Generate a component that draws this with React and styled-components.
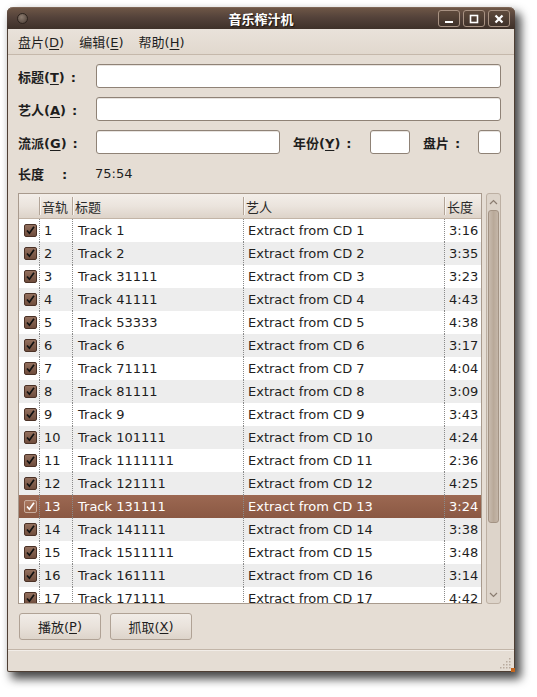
import React from 'react';
import styled, { createGlobalStyle } from 'styled-components';

const FONT = '"DejaVu Sans", "Noto Sans CJK SC", sans-serif';

const GlobalStyle = createGlobalStyle`
  html, body {
    margin: 0;
    padding: 0;
    background: #ffffff;
  }
  body {
    font-family: ${FONT};
    font-size: 13px;
    color: #1e1e1e;
  }
`;

const tracks = [
  ['1', 'Track 1', '3:16'],
  ['2', 'Track 2', '3:35'],
  ['3', 'Track 31111', '3:23'],
  ['4', 'Track 41111', '4:43'],
  ['5', 'Track 53333', '4:38'],
  ['6', 'Track 6', '3:17'],
  ['7', 'Track 71111', '4:04'],
  ['8', 'Track 81111', '3:09'],
  ['9', 'Track 9', '3:43'],
  ['10', 'Track 101111', '4:24'],
  ['11', 'Track 1111111', '2:36'],
  ['12', 'Track 121111', '4:25'],
  ['13', 'Track 131111', '3:24'],
  ['14', 'Track 141111', '3:38'],
  ['15', 'Track 1511111', '3:48'],
  ['16', 'Track 161111', '3:14'],
  ['17', 'Track 171111', '4:42'],
];

const SELECTED = 13;
const COLS = '20px 33px 171px 201px 1fr';

const Page = styled.div`
  padding: 7px 0 0 7px;
  height: 697px;
  box-sizing: border-box;
`;

const Window = styled.div`
  width: 508px;
  height: 665px;
  box-sizing: border-box;
  display: flex;
  flex-direction: column;
  background: #e5ddd4;
  border: 1px solid #4e3f34;
  border-top: none;
  border-radius: 6px 6px 2px 2px;
  box-shadow: 5px 6px 10px 1px rgba(0, 0, 0, 0.72);
  position: relative;
`;

const TitleBar = styled.div`
  height: 22px;
  flex: none;
  margin: 0 -1px;
  border-radius: 6px 6px 0 0;
  background: linear-gradient(#6d5646 0%, #54423a 45%, #3e3129 100%);
  border-top: 1px solid #7d6656;
  box-sizing: border-box;
  display: flex;
  align-items: center;
  position: relative;
  padding: 0 5px 0 10px;
`;

const WinIcon = styled.div`
  width: 9px;
  height: 9px;
  border-radius: 50%;
  background: radial-gradient(circle at 40% 35%, #8c7c70, #4a3c33);
  border: 1px solid #2d231d;
`;

const Title = styled.div`
  position: absolute;
  left: 0;
  right: 0;
  text-align: center;
  font-weight: bold;
  font-size: 13px;
  color: #ffffff;
  text-shadow: 1px 1px 1px #1a120d;
  pointer-events: none;
`;

const WinButtons = styled.div`
  margin-left: auto;
  display: flex;
  gap: 3px;
  position: relative;
`;

const WinButton = styled.div`
  width: 22px;
  height: 17px;
  box-sizing: border-box;
  border: 1px solid #a89282;
  border-radius: 3px;
  background: linear-gradient(#5e4a3c, #40322a);
  display: flex;
  align-items: center;
  justify-content: center;
`;

const MenuBar = styled.div`
  height: 26px;
  flex: none;
  box-sizing: border-box;
  display: flex;
  align-items: center;
  padding-left: 3px;
  background: linear-gradient(#e9e2da, #e1d8ce);
  border-bottom: 1px solid #c5b8ab;
`;

const MenuItem = styled.div`
  padding: 0 7px;
  margin-right: 1px;
  font-size: 13px;
  color: #1e1e1e;
`;

const U = styled.span`
  text-decoration: underline;
  text-underline-offset: 2px;
`;

const Colon = styled.span`
  margin-left: ${(p) => p.$ml}px;
`;

const Body = styled.div`
  flex: 1;
  display: flex;
  flex-direction: column;
  padding: 9px 13px 0 10px;
`;

const FormRow = styled.div`
  display: flex;
  align-items: center;
  height: 24px;
  margin-bottom: 9px;
`;

const Label = styled.div`
  width: ${(p) => p.$w || 78}px;
  margin-left: ${(p) => p.$ml || 0}px;
  flex: none;
  font-weight: bold;
  font-size: 13px;
  white-space: nowrap;
  color: #1e1e1e;
`;

const Input = styled.div`
  height: 24px;
  box-sizing: border-box;
  background: #ffffff;
  border: 1px solid #8f8276;
  border-radius: 3px;
  box-shadow: inset 0 1px 0 #e8e4e0;
  ${(p) => (p.$w ? `width: ${p.$w}px; flex: none;` : 'flex: 1;')}
`;

const LengthRow = styled.div`
  display: flex;
  align-items: center;
  height: 20px;
  margin-bottom: 10px;
`;

const Value = styled.div`
  font-size: 13px;
  margin-left: -1px;
`;

const ListArea = styled.div`
  display: flex;
  gap: 4px;
  height: 411px;
`;

const TreeFrame = styled.div`
  flex: 1;
  border: 1px solid #a89a8d;
  background: #ffffff;
  display: flex;
  flex-direction: column;
  overflow: hidden;
`;

const HeaderRow = styled.div`
  display: grid;
  grid-template-columns: ${COLS};
  height: 24px;
  flex: none;
  background: linear-gradient(#f3eee9 0%, #ebe4dd 50%, #ddd3c9 100%);
  border-bottom: 1px solid #c2b4a6;
`;

const HeaderCell = styled.div`
  display: flex;
  align-items: center;
  padding-left: 3px;
  font-size: 13px;
  color: #2a2a2a;
  position: relative;
  ${(p) =>
    p.$sep &&
    `&::before {
      content: '';
      position: absolute;
      left: 0;
      top: 3px;
      bottom: 3px;
      width: 1px;
      background: #b2a497;
      box-shadow: 1px 0 0 #f8f4f0;
    }`}
`;

const Rows = styled.div`
  flex: 1;
  overflow: hidden;
`;

const Row = styled.div`
  display: grid;
  grid-template-columns: ${COLS};
  height: 23px;
  background: ${(p) =>
    p.$selected
      ? 'linear-gradient(#9c6852, #8a5843)'
      : p.$odd
      ? '#ffffff'
      : '#ededed'};
  color: ${(p) => (p.$selected ? '#ffffff' : '#1e1e1e')};
`;

const Cell = styled.div`
  display: flex;
  align-items: center;
  padding-left: ${(p) => p.$pl || 5}px;
  border-left: 1px dotted #8a8a8a;
  font-size: 13px;
  white-space: nowrap;
  overflow: hidden;
`;

const CheckCell = styled.div`
  display: flex;
  align-items: center;
  justify-content: flex-end;
  padding-right: 2px;
`;

const Box = styled.div`
  width: 13px;
  height: 13px;
  box-sizing: border-box;
  border-radius: 2px;
  border: 1px solid ${(p) => (p.$selected ? '#c8ab9c' : '#4a3126')};
  background: ${(p) =>
    p.$selected
      ? 'linear-gradient(#a9775f, #956249)'
      : 'linear-gradient(#93705e, #6f4d3d)'};
  display: flex;
  align-items: center;
  justify-content: center;
`;

const ScrollBar = styled.div`
  width: 15px;
  flex: none;
  box-sizing: border-box;
  border: 1px solid #bdb0a3;
  border-radius: 3px;
  background: #ddd4ca;
  display: flex;
  flex-direction: column;
  align-items: center;
`;

const Arrow = styled.div`
  height: 16px;
  flex: none;
  display: flex;
  align-items: center;
  justify-content: center;
  ${(p) => p.$end && 'margin-top: auto;'}
`;

const Thumb = styled.div`
  width: 11px;
  height: 313px;
  box-sizing: border-box;
  border: 1px solid #a39384;
  border-radius: 3px;
  background: linear-gradient(90deg, #c8bbae, #b9a999 50%, #c4b6a8);
`;

const ButtonRow = styled.div`
  display: flex;
  gap: 9px;
  padding: 9px 0 0 1px;
  height: 27px;
  box-sizing: content-box;
`;

const Button = styled.div`
  width: 82px;
  height: 27px;
  box-sizing: border-box;
  border: 1px solid #b0a295;
  border-radius: 3px;
  background: linear-gradient(#f1ece7 0%, #e9e2db 50%, #ddd4ca 100%);
  display: flex;
  align-items: center;
  justify-content: center;
  font-size: 13px;
  color: #1e1e1e;
`;

const StatusBar = styled.div`
  margin-top: 9px;
  margin-left: -10px;
  margin-right: -13px;
  flex: 1;
  border-top: 1px solid #c2b5a8;
  box-shadow: inset 0 1px 0 #f2ede8;
  position: relative;
`;

const Grip = styled.svg`
  position: absolute;
  right: 2px;
  bottom: 2px;
`;

const Corner = styled.div`
  position: absolute;
  right: -1px;
  bottom: -1px;
  width: 4px;
  height: 4px;
  background: #c4651c;
`;

const Check = ({ white }) => (
  <svg width="9" height="9" viewBox="0 0 9 9">
    <path
      d="M1 4.5 L3.4 7.2 L8 0.8"
      fill="none"
      stroke={white ? '#ffffff' : '#111111'}
      strokeWidth="1.7"
    />
  </svg>
);

export default function App() {
  return (
    <Page>
      <GlobalStyle />
      <Window>
        <TitleBar>
          <WinIcon />
          <Title>音乐榨汁机</Title>
          <WinButtons>
            <WinButton>
              <svg width="10" height="10" viewBox="0 0 10 10">
                <rect x="1" y="7" width="8" height="2" fill="#fff" />
              </svg>
            </WinButton>
            <WinButton>
              <svg width="10" height="10" viewBox="0 0 10 10">
                <rect x="1.5" y="1.5" width="7" height="7" fill="none" stroke="#fff" strokeWidth="1.6" />
              </svg>
            </WinButton>
            <WinButton>
              <svg width="10" height="10" viewBox="0 0 10 10">
                <path d="M1.5 1.5 L8.5 8.5 M8.5 1.5 L1.5 8.5" stroke="#fff" strokeWidth="2.2" />
              </svg>
            </WinButton>
          </WinButtons>
        </TitleBar>

        <MenuBar>
          <MenuItem>盘片(<U>D</U>)</MenuItem>
          <MenuItem>编辑(<U>E</U>)</MenuItem>
          <MenuItem>帮助(<U>H</U>)</MenuItem>
        </MenuBar>

        <Body>
          <FormRow>
            <Label>标题(<U>T</U>)<Colon $ml={6}>:</Colon></Label>
            <Input />
          </FormRow>
          <FormRow>
            <Label>艺人(<U>A</U>)<Colon $ml={6}>:</Colon></Label>
            <Input />
          </FormRow>
          <FormRow>
            <Label>流派(<U>G</U>)<Colon $ml={6}>:</Colon></Label>
            <Input $w={184} />
            <Label $w={77} $ml={13}>年份(<U>Y</U>)<Colon $ml={6}>:</Colon></Label>
            <Input $w={40} />
            <Label $w={55} $ml={13}>盘片<Colon $ml={6}>:</Colon></Label>
            <Input />
          </FormRow>
          <LengthRow>
            <Label>长度<Colon $ml={18}>:</Colon></Label>
            <Value>75:54</Value>
          </LengthRow>

          <ListArea>
            <TreeFrame>
              <HeaderRow>
                <HeaderCell />
                <HeaderCell $sep>音轨</HeaderCell>
                <HeaderCell $sep>标题</HeaderCell>
                <HeaderCell $sep>艺人</HeaderCell>
                <HeaderCell $sep>长度</HeaderCell>
              </HeaderRow>
              <Rows>
                {tracks.map(([no, title, len], i) => {
                  const selected = i + 1 === SELECTED;
                  return (
                    <Row key={no} $odd={i % 2 === 0} $selected={selected}>
                      <CheckCell>
                        <Box $selected={selected}>
                          <Check white={selected} />
                        </Box>
                      </CheckCell>
                      <Cell $pl={4}>{no}</Cell>
                      <Cell>{title}</Cell>
                      <Cell $pl={4}>Extract from CD {no}</Cell>
                      <Cell $pl={4}>{len}</Cell>
                    </Row>
                  );
                })}
              </Rows>
            </TreeFrame>
            <ScrollBar>
              <Arrow>
                <svg width="9" height="6" viewBox="0 0 9 6">
                  <path d="M1 5 L4.5 1.5 L8 5" fill="none" stroke="#8a7c70" strokeWidth="1.2" />
                </svg>
              </Arrow>
              <Thumb />
              <Arrow $end>
                <svg width="9" height="6" viewBox="0 0 9 6">
                  <path d="M1 1 L4.5 4.5 L8 1" fill="none" stroke="#8a7c70" strokeWidth="1.2" />
                </svg>
              </Arrow>
            </ScrollBar>
          </ListArea>

          <ButtonRow>
            <Button>播放(<U>P</U>)</Button>
            <Button>抓取(<U>X</U>)</Button>
          </ButtonRow>

          <StatusBar>
            <Grip width="12" height="12" viewBox="0 0 12 12">
              {[
                [10, 2], [10, 5], [7, 5], [10, 8], [7, 8], [4, 8],
                [10, 11], [7, 11], [4, 11], [1, 11],
              ].map(([x, y]) => (
                <rect key={`${x}-${y}`} x={x - 1} y={y - 1} width="1.5" height="1.5" fill="#b9ab9e" />
              ))}
            </Grip>
          </StatusBar>
        </Body>
        <Corner />
      </Window>
    </Page>
  );
}
